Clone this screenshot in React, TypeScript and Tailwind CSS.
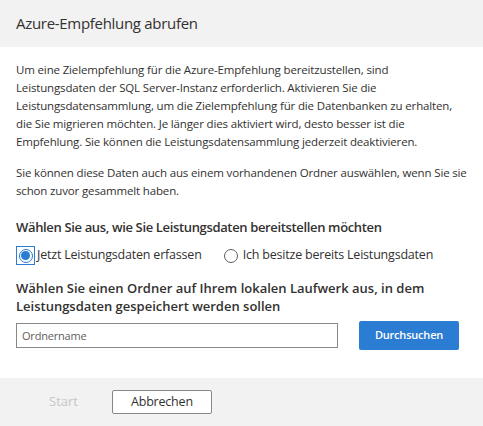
import React, { useState } from "react";

const font = { fontFamily: '"Segoe UI", "Open Sans", "Noto Sans", sans-serif' };

const Radio = ({ checked, focused, label, onClick }: { checked: boolean; focused?: boolean; label: string; onClick: () => void }) => (
  <button onClick={onClick} className="flex items-center gap-[2px] text-[12.5px] tracking-[-0.2px] text-[#323130]">
    <span className={`flex h-[19px] w-[19px] items-center justify-center ${focused ? "border border-[#2b7cd3]" : ""}`}>
      <span className={`flex h-[14px] w-[14px] items-center justify-center rounded-full border ${checked ? "border-[#2b7cd3]" : "border-[#605e5c]"}`}>
        {checked && <span className="h-[9px] w-[9px] rounded-full bg-[#2b7cd3]" />}
      </span>
    </span>
    <span>{label}</span>
  </button>
);

export default function App() {
  const [mode, setMode] = useState<"now" | "existing">("now");

  return (
    <div style={font} className="flex h-[426px] w-[483px] flex-col bg-white text-[#323130]">
      <div className="flex h-[47px] items-center bg-[#f2f2f2] px-4 text-[15px] tracking-[-0.3px] text-[#323130]">
        Azure-Empfehlung abrufen
      </div>

      <div className="flex flex-1 flex-col px-4 pt-[14px]">
        <p className="text-[11.5px] leading-[18px] tracking-[-0.15px]">
          Um eine Zielempfehlung für die Azure-Empfehlung bereitzustellen, sind Leistungsdaten der SQL Server-Instanz erforderlich. Aktivieren Sie die Leistungsdatensammlung, um die Zielempfehlung für die Datenbanken zu erhalten, die Sie migrieren möchten. Je länger dies aktiviert wird, desto besser ist die Empfehlung. Sie können die Leistungsdatensammlung jederzeit deaktivieren.
        </p>
        <p className="mt-[13px] text-[11.5px] leading-[18px] tracking-[-0.15px]">
          Sie können diese Daten auch aus einem vorhandenen Ordner auswählen, wenn Sie sie schon zuvor gesammelt haben.
        </p>

        <h3 className="mt-[18px] text-[13px] font-semibold leading-[18px] tracking-[-0.35px]">
          Wählen Sie aus, wie Sie Leistungsdaten bereitstellen möchten
        </h3>
        <div className="mt-[10px] flex items-center gap-[20px]">
          <Radio checked={mode === "now"} focused label="Jetzt Leistungsdaten erfassen" onClick={() => setMode("now")} />
          <Radio checked={mode === "existing"} label="Ich besitze bereits Leistungsdaten" onClick={() => setMode("existing")} />
        </div>

        <h3 className="mt-[14px] text-[13px] font-semibold leading-[18px]">
          Wählen Sie einen Ordner auf Ihrem lokalen Laufwerk aus, in dem Leistungsdaten gespeichert werden sollen
        </h3>
        <div className="mt-[6px] flex items-center">
          <input
            placeholder="Ordnername"
            className="h-[25px] w-[322px] border border-[#8a8886] px-[5px] text-[11px] tracking-[-0.2px] placeholder:text-[#605e5c] outline-none"
          />
          <button className="ml-[21px] h-[29px] w-[100px] rounded-[2px] bg-[#2b7cd3] text-[11px] font-semibold tracking-[-0.2px] text-white">
            Durchsuchen
          </button>
        </div>
      </div>

      <div className="flex h-[48px] items-center bg-[#f2f2f2] pl-[49px]">
        <span className="text-[13px] text-[#c8c6c4]">Start</span>
        <button className="ml-[34px] h-[24px] w-[100px] rounded-[2px] border border-[#8a8886] bg-white text-[12.5px] tracking-[-0.2px] text-[#323130]">
          Abbrechen
        </button>
      </div>
    </div>
  );
}
